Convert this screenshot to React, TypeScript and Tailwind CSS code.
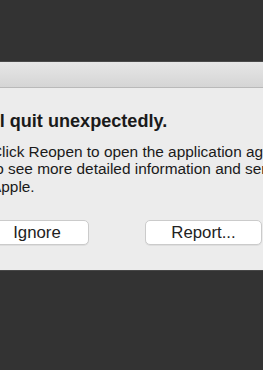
import React from "react";

export default function App() {
  const font = { fontFamily: '"Liberation Sans", Arial, sans-serif' };
  return (
    <div
      className="w-[263px] h-[370px] bg-[#333333] overflow-hidden pt-[61px]"
      style={font}
    >
      <div className="h-px bg-[#4a4a4a]" />
      <div className="ml-[-40px] w-[520px] flex flex-col">
        <div className="h-[26px] bg-gradient-to-b from-[#e7e7e7] to-[#d5d5d5] border-b border-[#b9b9b9]" />
        <div className="h-[182px] bg-[#ececec] pl-[31px] pt-[22px] text-[#1a1a1a]">
          <div className="ml-[-21.5px] text-[18.1px] leading-[22px] font-bold whitespace-nowrap">
            Mail quit unexpectedly.
          </div>
          <div className="mt-[10.7px] text-[15.4px] leading-[17.7px] whitespace-nowrap">
            Click Reopen to open the application again. Click Report
            <br />
            to see more detailed information and send a report to
            <br />
            Apple.
          </div>
          <div className="mt-[24px] ml-[-6px] flex gap-[56px]">
            <button className="shrink-0 w-[104px] h-[25px] bg-white border border-[#cbcbcb] rounded-[5px] shadow-[0_1px_0_rgba(0,0,0,0.06)] text-[16.8px] leading-[23px] text-[#222] flex items-center justify-center">
              Ignore
            </button>
            <button className="shrink-0 w-[117px] h-[25px] bg-white border border-[#cbcbcb] rounded-[5px] shadow-[0_1px_0_rgba(0,0,0,0.06)] text-[16.8px] leading-[23px] text-[#222] flex items-center justify-center">
              Report...
            </button>
            <button className="shrink-0 w-[104px] h-[25px] bg-white border border-[#cbcbcb] rounded-[5px] text-[16.8px] leading-[23px] text-[#222] flex items-center justify-center">
              Reopen
            </button>
          </div>
        </div>
        <div className="h-px bg-[#474747]" />
      </div>
    </div>
  );
}
